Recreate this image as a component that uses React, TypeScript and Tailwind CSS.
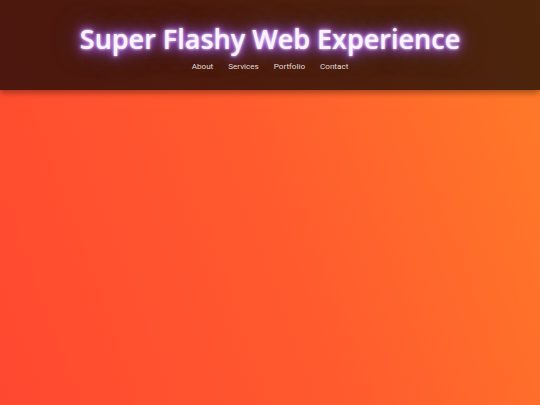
export default function App() {
  const links = ['About', 'Services', 'Portfolio', 'Contact'];

  return (
    <div className="min-h-[405px] w-full bg-[linear-gradient(70deg,#ff4830_0%,#ff5a2e_50%,#ff7c28_100%)] font-['Open_Sans',sans-serif]">
      <header className="flex h-[90px] flex-col items-center bg-[rgba(0,0,0,0.7)] pt-[22px] shadow-[0_3px_6px_rgba(0,0,0,0.35)]">
        <h1 className="h-[34px] text-[27px] font-semibold leading-[34px] text-[#fbf4ff] [text-shadow:0_0_3px_#fff,0_0_7px_#c07cff,0_0_12px_#a855f7,0_0_18px_#9333ea,0_0_28px_rgba(60,200,200,0.55)]">
          Super Flashy Web Experience
        </h1>
        <nav className="mt-[4px] flex gap-[15px] font-['Roboto',sans-serif] text-[8.1px] leading-[12px] text-[#e2dad6]">
          {links.map(l => (
            <a key={l} href="#">{l}</a>
          ))}
        </nav>
      </header>
    </div>
  );
}
